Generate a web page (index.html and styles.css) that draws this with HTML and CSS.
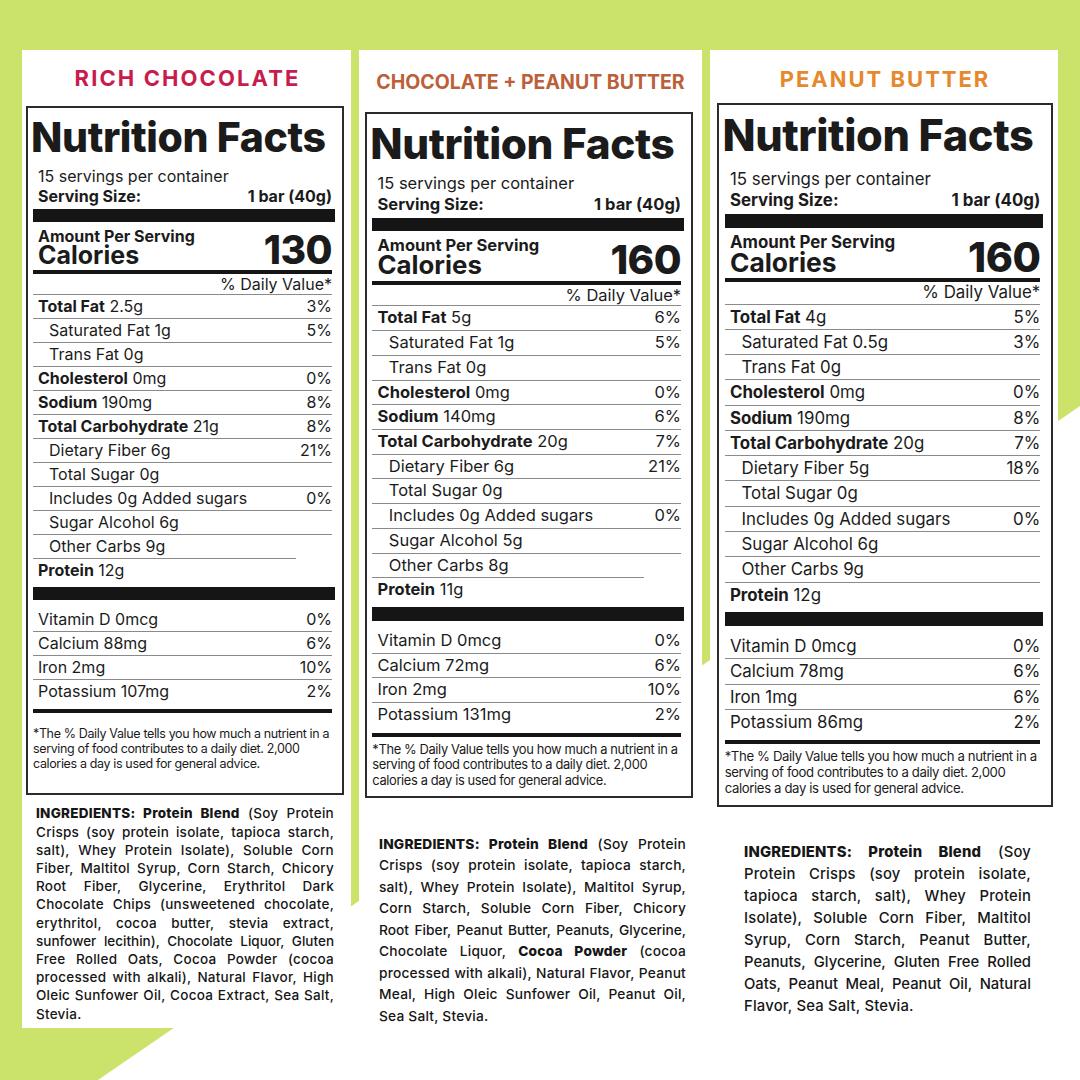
FILE: index.html
```html
<!DOCTYPE html>
<html lang="en">
<head>
<meta charset="utf-8">
<title>Nutrition Facts</title>
<link rel="stylesheet" href="styles.css">
</head>
<body>
<div class="page">
  <div class="cols">

    <section class="panel p1">
      <h2 class="flavor">RICH CHOCOLATE</h2>
      <div class="label">
        <h1 class="nf">Nutrition Facts</h1>
        <p class="servings">15 servings per container</p>
        <div class="serving-size"><span>Serving Size:</span><span>1 bar (40g)</span></div>
        <div class="bar thick serving-bar"></div>
        <div class="cal-row">
          <div class="cal-left"><div class="aps">Amount Per Serving</div><div class="cal-word">Calories</div></div>
          <div class="cal-num">130</div>
        </div>
        <div class="dv-head">% Daily Value*</div>
        <div class="row"><span><b>Total Fat</b> 2.5g</span><span>3%</span></div>
        <div class="row ind"><span>Saturated Fat 1g</span><span>5%</span></div>
        <div class="row ind"><span>Trans Fat 0g</span><span></span></div>
        <div class="row"><span><b>Cholesterol</b> 0mg</span><span>0%</span></div>
        <div class="row"><span><b>Sodium</b> 190mg</span><span>8%</span></div>
        <div class="row"><span><b>Total Carbohydrate</b> 21g</span><span>8%</span></div>
        <div class="row ind"><span>Dietary Fiber 6g</span><span>21%</span></div>
        <div class="row ind"><span>Total Sugar 0g</span><span></span></div>
        <div class="row ind"><span>Includes 0g Added sugars</span><span>0%</span></div>
        <div class="row ind"><span>Sugar Alcohol 6g</span><span></span></div>
        <div class="row ind short"><span>Other Carbs 9g</span><span></span></div>
        <div class="row protein"><span><b>Protein</b> 12g</span><span></span></div>
        <div class="bar thick"></div>
        <div class="vit">
          <div class="row"><span>Vitamin D 0mcg</span><span>0%</span></div>
          <div class="row"><span>Calcium 88mg</span><span>6%</span></div>
          <div class="row"><span>Iron 2mg</span><span>10%</span></div>
          <div class="row last"><span>Potassium 107mg</span><span>2%</span></div>
        </div>
        <div class="bar mid"></div>
        <p class="foot">*The % Daily Value tells you how much a nutrient in a<br>serving of food contributes to a daily diet. 2,000<br>calories a day is used for general advice.</p>
      </div>
      <p class="ingr">
        <span class="ln"><b>INGREDIENTS: Protein Blend</b> (Soy Protein</span>
        <span class="ln">Crisps (soy protein isolate, tapioca starch,</span>
        <span class="ln">salt), Whey Protein Isolate), Soluble Corn</span>
        <span class="ln">Fiber, Maltitol Syrup, Corn Starch, Chicory</span>
        <span class="ln">Root Fiber, Glycerine, Erythritol Dark</span>
        <span class="ln">Chocolate Chips (unsweetened chocolate,</span>
        <span class="ln">erythritol, cocoa butter, stevia extract,</span>
        <span class="ln tight">sunfower lecithin), Chocolate Liquor, Gluten</span>
        <span class="ln">Free Rolled Oats, Cocoa Powder (cocoa</span>
        <span class="ln">processed with alkali), Natural Flavor, High</span>
        <span class="ln">Oleic Sunfower Oil, Cocoa Extract, Sea Salt,</span>
        <span class="ln">Stevia.</span>
      </p>
    </section>

    <section class="panel p2">
      <h2 class="flavor">CHOCOLATE + PEANUT BUTTER</h2>
      <div class="label">
        <h1 class="nf">Nutrition Facts</h1>
        <p class="servings">15 servings per container</p>
        <div class="serving-size"><span>Serving Size:</span><span>1 bar (40g)</span></div>
        <div class="bar thick serving-bar"></div>
        <div class="cal-row">
          <div class="cal-left"><div class="aps">Amount Per Serving</div><div class="cal-word">Calories</div></div>
          <div class="cal-num">160</div>
        </div>
        <div class="dv-head">% Daily Value*</div>
        <div class="row"><span><b>Total Fat</b> 5g</span><span>6%</span></div>
        <div class="row ind"><span>Saturated Fat 1g</span><span>5%</span></div>
        <div class="row ind"><span>Trans Fat 0g</span><span></span></div>
        <div class="row"><span><b>Cholesterol</b> 0mg</span><span>0%</span></div>
        <div class="row"><span><b>Sodium</b> 140mg</span><span>6%</span></div>
        <div class="row"><span><b>Total Carbohydrate</b> 20g</span><span>7%</span></div>
        <div class="row ind"><span>Dietary Fiber 6g</span><span>21%</span></div>
        <div class="row ind"><span>Total Sugar 0g</span><span></span></div>
        <div class="row ind"><span>Includes 0g Added sugars</span><span>0%</span></div>
        <div class="row ind"><span>Sugar Alcohol 5g</span><span></span></div>
        <div class="row ind short"><span>Other Carbs 8g</span><span></span></div>
        <div class="row protein"><span><b>Protein</b> 11g</span><span></span></div>
        <div class="bar thick"></div>
        <div class="vit">
          <div class="row"><span>Vitamin D 0mcg</span><span>0%</span></div>
          <div class="row"><span>Calcium 72mg</span><span>6%</span></div>
          <div class="row"><span>Iron 2mg</span><span>10%</span></div>
          <div class="row last"><span>Potassium 131mg</span><span>2%</span></div>
        </div>
        <div class="bar mid"></div>
        <p class="foot">*The % Daily Value tells you how much a nutrient in a<br>serving of food contributes to a daily diet. 2,000<br>calories a day is used for general advice.</p>
      </div>
      <p class="ingr">
        <span class="ln"><b>INGREDIENTS: Protein Blend</b> (Soy Protein</span>
        <span class="ln">Crisps (soy protein isolate, tapioca starch,</span>
        <span class="ln">salt), Whey Protein Isolate), Maltitol Syrup,</span>
        <span class="ln">Corn Starch, Soluble Corn Fiber, Chicory</span>
        <span class="ln tight">Root Fiber, Peanut Butter, Peanuts, Glycerine,</span>
        <span class="ln">Chocolate Liquor, <b>Cocoa Powder</b> (cocoa</span>
        <span class="ln">processed with alkali), Natural Flavor, Peanut</span>
        <span class="ln">Meal, High Oleic Sunfower Oil, Peanut Oil,</span>
        <span class="ln">Sea Salt, Stevia.</span>
      </p>
    </section>

    <section class="panel p3">
      <h2 class="flavor">PEANUT BUTTER</h2>
      <div class="label">
        <h1 class="nf">Nutrition Facts</h1>
        <p class="servings">15 servings per container</p>
        <div class="serving-size"><span>Serving Size:</span><span>1 bar (40g)</span></div>
        <div class="bar thick serving-bar"></div>
        <div class="cal-row">
          <div class="cal-left"><div class="aps">Amount Per Serving</div><div class="cal-word">Calories</div></div>
          <div class="cal-num">160</div>
        </div>
        <div class="dv-head">% Daily Value*</div>
        <div class="row"><span><b>Total Fat</b> 4g</span><span>5%</span></div>
        <div class="row ind"><span>Saturated Fat 0.5g</span><span>3%</span></div>
        <div class="row ind"><span>Trans Fat 0g</span><span></span></div>
        <div class="row"><span><b>Cholesterol</b> 0mg</span><span>0%</span></div>
        <div class="row"><span><b>Sodium</b> 190mg</span><span>8%</span></div>
        <div class="row"><span><b>Total Carbohydrate</b> 20g</span><span>7%</span></div>
        <div class="row ind"><span>Dietary Fiber 5g</span><span>18%</span></div>
        <div class="row ind"><span>Total Sugar 0g</span><span></span></div>
        <div class="row ind"><span>Includes 0g Added sugars</span><span>0%</span></div>
        <div class="row ind"><span>Sugar Alcohol 6g</span><span></span></div>
        <div class="row ind"><span>Other Carbs 9g</span><span></span></div>
        <div class="row protein"><span><b>Protein</b> 12g</span><span></span></div>
        <div class="bar thick"></div>
        <div class="vit">
          <div class="row"><span>Vitamin D 0mcg</span><span>0%</span></div>
          <div class="row"><span>Calcium 78mg</span><span>6%</span></div>
          <div class="row"><span>Iron 1mg</span><span>6%</span></div>
          <div class="row last"><span>Potassium 86mg</span><span>2%</span></div>
        </div>
        <div class="bar mid"></div>
        <p class="foot">*The % Daily Value tells you how much a nutrient in a<br>serving of food contributes to a daily diet. 2,000<br>calories a day is used for general advice.</p>
      </div>
      <p class="ingr">
        <span class="ln"><b>INGREDIENTS: Protein Blend</b> (Soy</span>
        <span class="ln">Protein Crisps (soy protein isolate,</span>
        <span class="ln">tapioca starch, salt), Whey Protein</span>
        <span class="ln">Isolate), Soluble Corn Fiber, Maltitol</span>
        <span class="ln">Syrup, Corn Starch, Peanut Butter,</span>
        <span class="ln tight">Peanuts, Glycerine, Gluten Free Rolled</span>
        <span class="ln tight">Oats, Peanut Meal, Peanut Oil, Natural</span>
        <span class="ln">Flavor, Sea Salt, Stevia.</span>
      </p>
    </section>

  </div>
</div>
</body>
</html>
```

FILE: styles.css
```css
* { box-sizing: border-box; margin: 0; padding: 0; }

html, body { width: 1080px; height: 1080px; }

body {
  font-family: Inter, "Noto Sans", "Liberation Sans", sans-serif;
  color: #1b1b1b;
  background: #fff;
  overflow: hidden;
}

.page {
  position: relative;
  width: 1080px;
  height: 1080px;
  background: #fff;
  overflow: hidden;
}

.page::before {
  content: "";
  position: absolute;
  inset: 0;
  background: #cce36b;
  clip-path: polygon(0 0, 100% 0, 100% 406px, 98px 100%, 0 100%);
}

.cols {
  position: relative;
  display: grid;
  grid-template-columns: 329px 343px 348px;
  column-gap: 8px;
  padding: 50px 0 0 22px;
  align-items: start;
}

.panel { background: #fff; height: 1030px; }
.p1 { height: 978px; }

/* flavour headings */
.flavor { text-align: center; font-weight: 700; line-height: 1; }
.p1 .flavor { color: #c81d4c; font-size: 22px; letter-spacing: 2.1px; padding: 17px 0 17px 2px; }
.p2 .flavor { color: #bb6038; font-size: 19.5px; letter-spacing: 0; padding: 23px 0 19px; }
.p3 .flavor { color: #e6882c; font-size: 22px; letter-spacing: 2px; padding: 18px 0 13px 2px; }

/* label box */
.label {
  width: 318px;
  border: 2px solid #2b2b2b;
  padding: 8px 10px 22px 5px;
}
.p1 .label { margin-left: 4px; }
.p2 .label { zoom: 1.032; margin-left: 6px; padding-bottom: 7px; }
.p3 .label { zoom: 1.055; margin-left: 7px; padding-bottom: 8.5px; }

.nf {
  font-size: 41px;
  font-weight: 800;
  line-height: 42px;
  letter-spacing: -0.4px;
  margin: 0 0 8px -2px;
}
.p3 .nf { margin-bottom: 10.5px; }

.servings { font-size: 16px; line-height: 20px; padding-left: 5px; font-weight: 400; }

.serving-size {
  display: flex;
  justify-content: space-between;
  font-size: 16px;
  font-weight: 700;
  line-height: 20px;
  padding-left: 5px;
}

.bar { background: #151515; }
.bar.thick { height: 13px; margin-right: -3px; }
.serving-bar { margin-top: 3px; }

.cal-row {
  display: flex;
  justify-content: space-between;
  align-items: last baseline;
  margin-top: 6px;
  padding: 0 0 4px 5px;
  border-bottom: 4px solid #151515;
}
.aps { font-size: 16px; font-weight: 700; line-height: 16px; }
.cal-word { font-size: 25px; font-weight: 700; line-height: 22px; }
.cal-num { font-size: 39px; font-weight: 800; line-height: 30px; letter-spacing: -0.5px; }

.dv-head {
  text-align: right;
  font-size: 16px;
  line-height: 20px;
  border-bottom: 1px solid #8a8a8a;
}

.row {
  display: flex;
  justify-content: space-between;
  font-size: 16px;
  line-height: 23px;
  padding-left: 5px;
  border-bottom: 1px solid #8a8a8a;
}
.row b { font-weight: 700; }
.row.ind { padding-left: 16px; }
.row.short {
  border-bottom: 0;
  padding-bottom: 1px;
  background: linear-gradient(#8a8a8a, #8a8a8a) left bottom / 88% 1px no-repeat;
}
.row.protein { border-bottom: 0; padding-bottom: 5px; }
.row.last { border-bottom: 0; }

.vit { padding-top: 8px; }

.bar.mid { height: 4px; margin-top: 5.5px; }

.foot {
  font-size: 12.5px;
  line-height: 15px;
  margin-top: 13.3px;
  white-space: nowrap;
  letter-spacing: -0.36px;
}
.p2 .foot { margin-top: 5px; }
.p3 .foot { margin-top: 4.5px; }

/* ingredients */
.ingr { font-weight: 500; color: #161616; }
.ingr b { font-weight: 800; }
.ingr .ln { display: block; text-align: justify; text-align-last: justify; }
.ingr .ln:last-child { text-align-last: left; }

.p1 .ingr { font-size: 13.5px; line-height: 18.2px; letter-spacing: 0.25px; margin-top: 9.5px; padding: 0 17px 0 14px; }
.p2 .ingr { font-size: 13.75px; line-height: 21.5px; letter-spacing: 0.2px; margin-top: 36px; padding: 0 16px 0 20px; }
.p3 .ingr { font-size: 14.8px; line-height: 22px; letter-spacing: 0.2px; margin-top: 34px; padding: 0 27px 0 34px; }
.ingr .ln.tight { letter-spacing: 0; }
```
